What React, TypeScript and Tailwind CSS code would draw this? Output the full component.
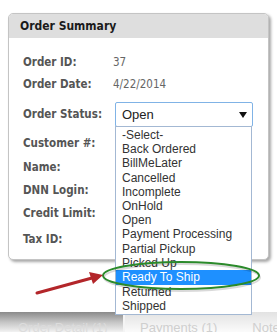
import React from "react";

const labelFont = { fontFamily: "'DejaVu Sans Condensed', 'DejaVu Sans', sans-serif" };
const listFont = { fontFamily: "'Liberation Sans', Arial, sans-serif" };

const options = [
  "-Select-",
  "Back Ordered",
  "BillMeLater",
  "Cancelled",
  "Incomplete",
  "OnHold",
  "Open",
  "Payment Processing",
  "Partial Pickup",
  "Picked Up",
  "Ready To Ship",
  "Returned",
  "Shipped",
];

export default function App() {
  return (
    <div className="relative w-[277px] h-[332px] overflow-hidden bg-white" style={labelFont}>
      {/* Card */}
      <div className="ml-[8px] mt-[13px] w-[261px] h-[247px] rounded-[5px] border border-[#c4c4c4] bg-white shadow-[2px_2px_3px_rgba(0,0,0,0.35)] overflow-hidden [font-stretch:condensed]">
        <div className="h-[24px] bg-[#dedede] pl-[11px] flex items-center text-[12px] font-bold text-[#1a1a1a]">
          Order Summary
        </div>
        <div className="pl-[14px] pt-[14px] text-[11.5px] text-[#555]">
          <div className="h-[22px] flex items-center">
            <span className="w-[90px] font-bold">Order ID:</span>
            <span className="text-[#666]">37</span>
          </div>
          <div className="h-[22px] flex items-center">
            <span className="w-[90px] font-bold">Order Date:</span>
            <span className="text-[#666]">4/22/2014</span>
          </div>
          <div className="h-[37px] flex items-center">
            <span className="w-[92px] font-bold">Order Status:</span>
            <div
              className="w-[138px] h-[25px] border border-[#80b3e6] rounded-[2px] flex items-center justify-between pl-[6px] pr-[5px] text-[13px] text-[#222] bg-white"
              style={listFont}
            >
              <span>Open</span>
              <svg width="8" height="6" viewBox="0 0 8 6">
                <path d="M0 0 H8 L4 6 Z" fill="#111" />
              </svg>
            </div>
          </div>
          <div className="h-[22px] flex items-center">
            <span className="font-bold">Customer #:</span>
          </div>
          <div className="h-[26px] flex items-center">
            <span className="font-bold">Name:</span>
          </div>
          <div className="h-[20px] flex items-center">
            <span className="font-bold">DNN Login:</span>
          </div>
          <div className="h-[26px] flex items-center">
            <span className="font-bold">Credit Limit:</span>
          </div>
          <div className="h-[26px] flex items-center">
            <span className="font-bold">Tax ID:</span>
          </div>
        </div>
      </div>

      {/* Bottom tabs */}
      <div
        className="mt-[52px] h-[20px] flex bg-gradient-to-b from-[#e2e2e2] to-[#fbfbfb] whitespace-nowrap text-[13px] leading-[15px]"
        style={listFont}
      >
        <div className="w-[123px] shrink-0 h-full bg-gradient-to-b from-[#8a8a8a] via-[#c4c4c4] to-[#f2f2f2] pl-[18px] pt-[8px] text-[#dcdcdc]">
          Order Detail (1)
        </div>
        <div className="w-[2px] shrink-0 bg-[#f4f4f4]" />
        <div className="flex gap-[35px] pl-[15px] pt-[8px] text-[#cfcfcf]">
          <span>Payments (1)</span>
          <span>Notes</span>
        </div>
      </div>

      {/* Dropdown list */}
      <div
        className="absolute left-[115px] top-[126px] w-[137px] border border-[#a3b8d3] bg-white pt-[1px] pb-[1px] text-[12px] leading-[14.2px] text-[#333]"
        style={listFont}
      >
        {options.map((o) =>
          o === "Ready To Ship" ? (
            <div key={o} className="pl-[6px] bg-[#1e90ff] text-white h-[15px] leading-[15px]">
              {o}
            </div>
          ) : (
            <div key={o} className="pl-[6px]">
              {o}
            </div>
          )
        )}
      </div>

      {/* Annotations */}
      <svg className="absolute left-0 top-0" width="277" height="332" viewBox="0 0 277 332">
        <ellipse cx="181" cy="275.5" rx="78" ry="13.5" fill="none" stroke="rgba(0,0,0,0.15)" strokeWidth="2" transform="translate(1 2)" />
        <ellipse cx="181" cy="275.5" rx="78" ry="13.5" fill="none" stroke="#2b8a2b" strokeWidth="2" />
        <line x1="37" y1="293" x2="92" y2="278" stroke="#b3262a" strokeWidth="3" strokeLinecap="round" />
        <path d="M103 275 L89 272 L93 284 Z" fill="#b3262a" />
      </svg>
    </div>
  );
}
